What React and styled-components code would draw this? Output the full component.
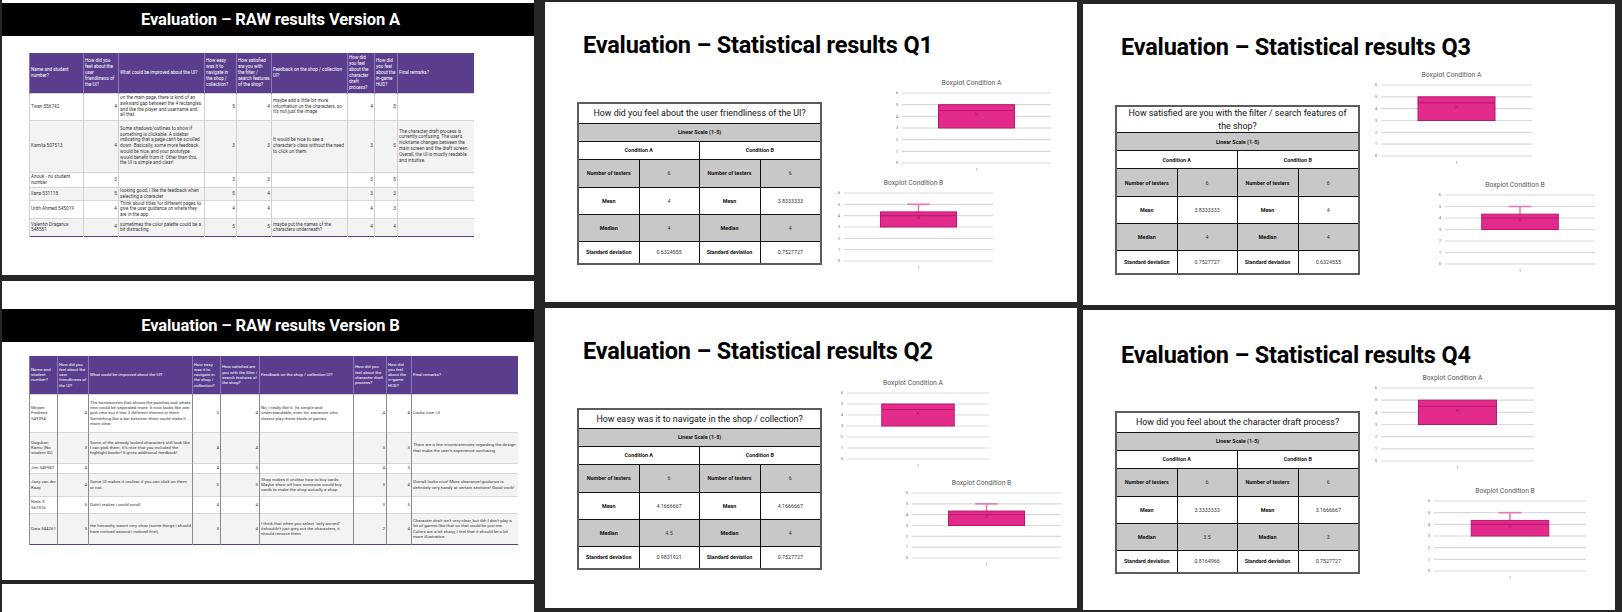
import React from 'react';
import styled, { createGlobalStyle } from 'styled-components';

const DARK = '#262626';
const PURPLE = '#5b3d8e';
const PINK = '#e22b8a';
const PINK_DARK = '#b9176f';
const PINK_LIGHT = '#e57bb6';

const GlobalStyle = createGlobalStyle`
  html, body { margin: 0; padding: 0; background: ${DARK}; }
  body { font-family: Roboto, "Liberation Sans", Arial, sans-serif; }
  #root { width: 1622px; height: 612px; overflow: hidden; }
`;

const Page = styled.div`
  display: flex;
  width: 1622px;
  height: 612px;
  background: ${DARK};
`;

const LeftColumn = styled.div`
  flex: none;
  width: 532px;
  margin-left: 2px;
  padding-top: 3px;
  background: #fff;
  display: flex;
  flex-direction: column;
`;

const Column = styled.div`
  flex: none;
  width: 532px;
  margin-left: ${(p) => p.$left}px;
  padding-top: ${(p) => p.$top}px;
  display: flex;
  flex-direction: column;
  gap: ${(p) => p.$gap}px;
`;

const Separator = styled.div`
  flex: none;
  height: ${(p) => p.$h}px;
  background: ${DARK};
`;

const Slide = styled.div`
  position: relative;
  flex: none;
  width: 532px;
  height: ${(p) => p.$h}px;
  background: #fff;
  overflow: hidden;
`;

/* ---------- RAW results slides ---------- */

const TitleBar = styled.div`
  margin-top: ${(p) => p.$top}px;
  height: 33px;
  background: #000;
  color: #fff;
  font-weight: 700;
  font-size: 16.5px;
  display: flex;
  align-items: center;
  justify-content: center;
  padding-left: 5px;
  letter-spacing: -0.1px;
`;

const RawTable = styled.table`
  margin-top: ${(p) => p.$mt}px;
  margin-left: 27px;
  width: ${(p) => p.$w}px;
  table-layout: fixed;
  border-collapse: collapse;
  font-size: ${(p) => p.$fs}px;
  line-height: ${(p) => p.$lh}px;
  color: #383838;
  border-bottom: 1.5px solid ${PURPLE};
`;

const RawHeadRow = styled.tr`
  height: ${(p) => p.$h}px;
  background: ${PURPLE};
`;

const RawHeadCell = styled.th`
  font-weight: 400;
  color: #fff;
  text-align: left;
  vertical-align: middle;
  padding: 0 1px;
  font-size: ${(p) => p.$fs}px;
  line-height: ${(p) => p.$lh}px;
  border-left: 1px solid #8d78b4;
  word-wrap: break-word;
`;

const RawRow = styled.tr`
  height: ${(p) => p.$h}px;
  background: ${(p) => (p.$alt ? '#f3f3f3' : '#fff')};
  border-top: 1.5px solid #d6d6d6;
`;

const RawCell = styled.td`
  text-align: ${(p) => (p.$num ? 'right' : 'left')};
  vertical-align: middle;
  padding: 0 1px;
  border-left: 1px solid ${(p) => p.$line};
  overflow: hidden;
`;

const NUMERIC = [1, 3, 4, 6, 7];

const HEADERS = [
  'Name and student number?',
  'How did you feel about the user friendliness of the UI?',
  'What could be improved about the UI?',
  'How easy was it to navigate in the shop / collection?',
  'How satisfied are you with the filter / search features of the shop?',
  'Feedback on the shop / collection UI?',
  'How did you feel about the character draft process?',
  'How did you feel about the in-game HUD?',
  'Final remarks?',
];

const ROWS_A = [
  ['Twan 556742', '4', 'on the main page, there is kind of an awkward gap between the 4 rectangles and like the player and username and all that.', '5', '4', "maybe add a little bit more information on the characters, so it's not just the image", '4', '5', ''],
  ['Kamila 507513', '4', "Some shadows/outlines to show if something is clickable. A sidebar indicating that a page can't be scrolled down. Basically, some more feedback would be nice, and your prototype would benefit from it. Other than this, the UI is simple and clear!", '3', '3', "It would be nice to see a character's class without the need to click on them.", '3', '5', "The character draft process is currently confusing. The user's nickname changes between the main screen and the draft screen. Overall, the UI is mostly readable and intuitive."],
  ['Anouk - no student number', '3', '', '3', '3', '', '3', '5', ''],
  ['Ilana 531118', '5', 'looking good, i like the feedback when selecting a character', '5', '4', '', '3', '3', ''],
  ['Urith Ahmed 545019', '4', 'Think about titles for different pages to give the user guidance on where they are in the app.', '4', '4', '', '4', '3', ''],
  ['Valentin Draganov 548551', '4', 'sometimes the color palette could be a bit distracting', '5', '5', 'maybe put the names of the characters underneath?', '4', '4', ''],
];

const ROWS_B = [
  ['Mirjam Foekens 549394', '4', 'The homescreen that shows the patches and whats new could be seperated more. It now looks like one grid view but it has 2 different themes in there. Something like a bar between them could make it more clear', '5', '4', 'No, i really like it. Its simple and understandable, even for someone who doesnt play these kinds of games.', '4', '4', 'Looks nice <3'],
  ['Dogukan Kamu (No student ID)', '3', "Some of the already locked characters still look like I can pick them. It's nice that you included the highlight border! It gives additional feedback!", '4', '4', '', '3', '3', "There are a few inconsistencies regarding the design that make the user's experience confusing."],
  ['Jim 549987', '4', '', '4', '3', '', '4', '3', ''],
  ['Joey van der Kaaij', '4', 'Some UI makes it unclear if you can click on them or not.', '5', '5', 'Shop makes it unclear how to buy cards. Maybe show off how someone would buy cards to make the shop actually a shop.', '3', '4', 'Overall looks nice! More clearance/guidance is definitely very handy at certain sections! Good work!'],
  ['Niels S 562516', '5', "Didn't realize i could scroll", '4', '4', '', '3', '5', ''],
  ['Dara 544261', '3', 'the hierarchy wasnt very clear (some things i should have noticed second i noticed first)', '3', '4', 'I think that when you select "only owned" itshouldn\'t just grey out the characters, it should remove them', '2', '4', "Character draft isn't very clear, but tbh I don't play a lot of games like that so that could be just me. Colors are a bit sharp, I feel that it should be a bit more illustrative."],
];

function RawSlide({ height, barTop, version, widths, heights, rows, tableTop, fs, lh, hfs, hlh, line }) {
  const total = widths.reduce((a, b) => a + b, 0);
  return (
    <Slide $h={height}>
      <TitleBar $top={barTop}>Evaluation – RAW results Version {version}</TitleBar>
      <RawTable $mt={tableTop} $w={total} $fs={fs} $lh={lh}>
        <colgroup>
          {widths.map((w, i) => (
            <col key={i} style={{ width: w }} />
          ))}
        </colgroup>
        <thead>
          <RawHeadRow $h={heights[0]}>
            {HEADERS.map((h, i) => (
              <RawHeadCell key={i} $fs={hfs} $lh={hlh}>
                {h}
              </RawHeadCell>
            ))}
          </RawHeadRow>
        </thead>
        <tbody>
          {rows.map((r, ri) => (
            <RawRow key={ri} $h={heights[ri + 1]} $alt={ri % 2 === 1}>
              {r.map((c, ci) => (
                <RawCell key={ci} $num={NUMERIC.includes(ci)} $line={line}>
                  {c}
                </RawCell>
              ))}
            </RawRow>
          ))}
        </tbody>
      </RawTable>
    </Slide>
  );
}

/* ---------- Statistical slides ---------- */

const StatTitle = styled.h1`
  margin: 0;
  padding: ${(p) => p.$top}px 0 0 38px;
  font-size: 23.5px;
  line-height: 23px;
  font-weight: 700;
  color: #000;
  letter-spacing: -0.2px;
  white-space: nowrap;
`;

const CanvasItem = styled.div`
  position: absolute;
  left: ${(p) => p.$x}px;
  top: ${(p) => p.$y}px;
`;

const StatTable = styled.table`
  width: 243px;
  table-layout: fixed;
  border-collapse: collapse;
  border: 2px solid #5c5c5c;
`;

const StatRow = styled.tr`
  height: ${(p) => p.$h}px;
`;

const QuestionCell = styled.td`
  border: 1.5px solid #111;
  background: #fff;
  color: #111;
  font-size: 8.9px;
  line-height: 12.5px;
  text-align: center;
  vertical-align: middle;
  padding: 0 5px;
`;

const StatCell = styled.td`
  border: 1.5px solid #111;
  background: ${(p) => (p.$gray ? '#c8c8c8' : '#fff')};
  text-align: center;
  vertical-align: middle;
  padding: 0;
  font-size: ${(p) => (p.$label ? 5.4 : 5.3)}px;
  font-weight: ${(p) => (p.$label ? 700 : 400)};
  color: ${(p) => (p.$label ? '#111' : '#333')};
  white-space: nowrap;
`;

const ROW_LABELS = ['Number of testers', 'Mean', 'Median', 'Standard deviation'];
const ROW_HEIGHTS = [28, 27, 27, 23];

function StatsTable({ question, qh, a, b }) {
  return (
    <StatTable>
      <colgroup>
        <col style={{ width: 61 }} />
        <col style={{ width: 60 }} />
        <col style={{ width: 61 }} />
        <col style={{ width: 61 }} />
      </colgroup>
      <tbody>
        <StatRow $h={qh}>
          <QuestionCell colSpan={4}>{question}</QuestionCell>
        </StatRow>
        <StatRow $h={18}>
          <StatCell colSpan={4} $gray $label>
            Linear Scale (1-5)
          </StatCell>
        </StatRow>
        <StatRow $h={18}>
          <StatCell colSpan={2} $label>
            Condition A
          </StatCell>
          <StatCell colSpan={2} $label>
            Condition B
          </StatCell>
        </StatRow>
        {ROW_LABELS.map((label, i) => {
          const gray = i % 2 === 0;
          return (
            <StatRow key={label} $h={ROW_HEIGHTS[i]}>
              <StatCell $gray={gray} $label>
                {label}
              </StatCell>
              <StatCell $gray={gray}>{a[i]}</StatCell>
              <StatCell $gray={gray} $label>
                {label}
              </StatCell>
              <StatCell $gray={gray}>{b[i]}</StatCell>
            </StatRow>
          );
        })}
      </tbody>
    </StatTable>
  );
}

const ChartWrap = styled.div`
  position: absolute;
  left: ${(p) => p.$x - 10}px;
  top: ${(p) => p.$y - 16}px;
  width: ${(p) => p.$w + 10}px;
  display: flex;
  flex-direction: column;
`;

const ChartTitle = styled.div`
  height: 12px;
  line-height: 12px;
  font-size: 6.8px;
  color: #595959;
  text-align: center;
  white-space: nowrap;
`;

const ChartSvg = styled.svg`
  display: block;
  overflow: visible;
`;

function BoxChart({ x, y, w, h, variant }) {
  const L = 10;
  const T = 4;
  const yv = (v) => T + h - (v * h) / 6;
  const bx0 = L + 0.245 * w;
  const bx1 = L + 0.755 * w;
  const cx = L + w / 2;
  const isA = variant === 'A';
  const top = isA ? 5 : 4.333;
  const median = isA ? 4.5 : 4;
  const mean = isA ? 4.167 : 3.833;
  const my = yv(mean);
  return (
    <ChartWrap $x={x} $y={y} $w={w}>
      <ChartTitle>Boxplot Condition {variant}</ChartTitle>
      <ChartSvg width={w + 10} height={h + 16}>
        {[0, 1, 2, 3, 4, 5, 6].map((v) => (
          <g key={v}>
            <line x1={L} x2={L + w} y1={yv(v)} y2={yv(v)} stroke="#d9d9d9" strokeWidth="1.2" />
            <text x={L - 5} y={yv(v) + 1.2} fontSize="3.6" fill="#595959" textAnchor="middle">
              {v}
            </text>
          </g>
        ))}
        <text x={cx} y={T + h + 8} fontSize="3.6" fill="#595959" textAnchor="middle">
          1
        </text>
        {!isA && (
          <g stroke={PINK_LIGHT} strokeWidth="1.6">
            <line x1={cx} x2={cx} y1={yv(5)} y2={yv(top)} />
            <line x1={L + 0.425 * w} x2={L + 0.575 * w} y1={yv(5)} y2={yv(5)} />
          </g>
        )}
        <rect
          x={bx0}
          y={yv(top)}
          width={bx1 - bx0}
          height={yv(3) - yv(top)}
          fill={PINK}
          stroke={PINK_DARK}
          strokeWidth="1"
        />
        <line x1={bx0} x2={bx1} y1={yv(median)} y2={yv(median)} stroke={PINK_DARK} strokeWidth="1" />
        <g stroke="#a8146a" strokeWidth="0.6">
          <line x1={cx - 1.6} x2={cx + 1.6} y1={my - 1.6} y2={my + 1.6} />
          <line x1={cx - 1.6} x2={cx + 1.6} y1={my + 1.6} y2={my - 1.6} />
        </g>
      </ChartSvg>
    </ChartWrap>
  );
}

function StatSlide({ s }) {
  return (
    <Slide $h={s.h}>
      <StatTitle $top={s.titleTop}>Evaluation – Statistical results {s.q}</StatTitle>
      <CanvasItem $x={s.table.x} $y={s.table.y}>
        <StatsTable question={s.question} qh={s.table.qh} a={s.A} b={s.B} />
      </CanvasItem>
      <BoxChart {...s.ca} variant="A" />
      <BoxChart {...s.cb} variant="B" />
    </Slide>
  );
}

const STATS = {
  Q1: {
    q: 'Q1',
    h: 300,
    titleTop: 32,
    question: 'How did you feel about the user friendliness of the UI?',
    table: { x: 32, y: 100, qh: 20 },
    ca: { x: 357, y: 91, w: 149, h: 70 },
    cb: { x: 299, y: 191, w: 149, h: 68 },
    A: ['6', '4', '4', '0.6324555'],
    B: ['6', '3.8333333', '4', '0.7527727'],
  },
  Q2: {
    q: 'Q2',
    h: 300,
    titleTop: 32,
    question: 'How easy was it to navigate in the shop / collection?',
    table: { x: 32, y: 100, qh: 19 },
    ca: { x: 302, y: 85, w: 142, h: 66 },
    cb: { x: 367, y: 185, w: 149, h: 65 },
    A: ['6', '4.1666667', '4.5', '0.9831921'],
    B: ['6', '4.1666667', '4', '0.7527727'],
  },
  Q3: {
    q: 'Q3',
    h: 301,
    titleTop: 32,
    question: 'How satisfied are you with the filter / search features of the shop?',
    table: { x: 32, y: 101, qh: 26 },
    ca: { x: 298, y: 81, w: 151, h: 71 },
    cb: { x: 362, y: 191, w: 150, h: 69 },
    A: ['6', '3.8333333', '4', '0.7527727'],
    B: ['6', '4', '4', '0.6324555'],
  },
  Q4: {
    q: 'Q4',
    h: 300,
    titleTop: 34,
    question: 'How did you feel about the character draft process?',
    table: { x: 32, y: 101, qh: 20 },
    ca: { x: 298, y: 78, w: 153, h: 73 },
    cb: { x: 351, y: 191, w: 152, h: 70 },
    A: ['6', '3.3333333', '3.5', '0.8164966'],
    B: ['6', '3.1666667', '3', '0.7527727'],
  },
};

export default function App() {
  return (
    <>
      <GlobalStyle />
      <Page>
        <LeftColumn>
          <RawSlide
            height={272}
            barTop={0}
            version="A"
            widths={[54, 35, 86, 32, 35, 76, 27, 23, 76]}
            heights={[40, 27, 52, 15, 13, 17, 18]}
            rows={ROWS_A}
            tableTop={17}
            fs={4.7}
            lh={5.8}
            hfs={4.6}
            hlh={6}
            line="#d0d0d0"
          />
          <Separator $h={6} />
          <RawSlide
            height={299}
            barTop={28}
            version="B"
            widths={[28, 31, 104, 28, 39, 94, 33, 25, 106]}
            heights={[38, 38, 31, 10, 23, 17, 31]}
            rows={ROWS_B}
            tableTop={14}
            fs={4.4}
            lh={5.3}
            hfs={4.3}
            hlh={5.2}
            line="#8a8a8a"
          />
          <Separator $h={4} />
        </LeftColumn>
        <Column $left={11} $top={2} $gap={6}>
          <StatSlide s={STATS.Q1} />
          <StatSlide s={STATS.Q2} />
        </Column>
        <Column $left={6} $top={4} $gap={5}>
          <StatSlide s={STATS.Q3} />
          <StatSlide s={STATS.Q4} />
        </Column>
      </Page>
    </>
  );
}
